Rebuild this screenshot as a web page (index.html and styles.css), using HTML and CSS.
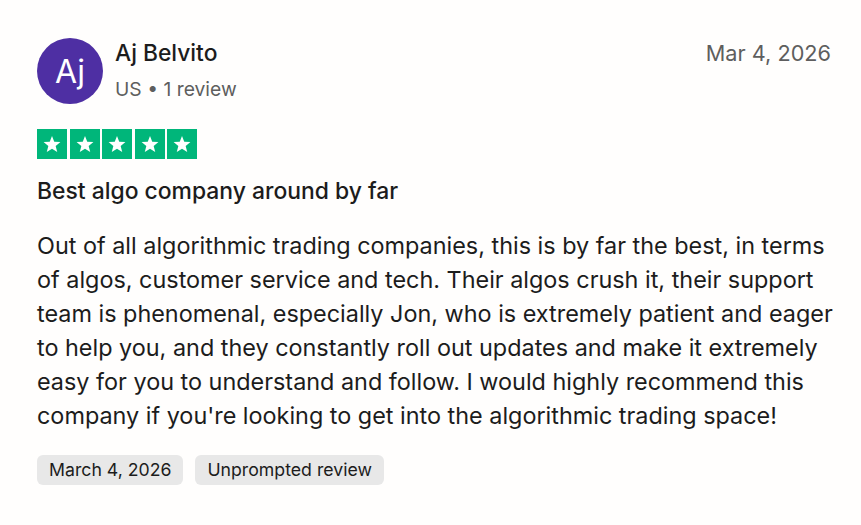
FILE: index.html
```html
<!DOCTYPE html>
<html lang="en">
<head>
<meta charset="utf-8">
<link rel="stylesheet" href="styles.css">
</head>
<body>
<article class="review">
  <header class="head">
    <div class="consumer">
      <div class="avatar">Aj</div>
      <div class="who">
        <div class="name">Aj Belvito</div>
        <div class="meta">US <span class="dot">•</span> 1 review</div>
      </div>
    </div>
    <time class="date">Mar 4, 2026</time>
  </header>
  <div class="stars">
    <span class="star"><svg viewBox="0 0 24 24"><path d="M12 3.2l2.47 6.3 6.73.38-5.2 4.28 1.7 6.54L12 17.05 6.3 20.7l1.7-6.54-5.2-4.28 6.730-.38z"/></svg></span>
    <span class="star"><svg viewBox="0 0 24 24"><path d="M12 3.2l2.47 6.3 6.73.38-5.2 4.28 1.7 6.54L12 17.05 6.3 20.7l1.7-6.54-5.2-4.28 6.73-.38z"/></svg></span>
    <span class="star"><svg viewBox="0 0 24 24"><path d="M12 3.2l2.47 6.3 6.73.38-5.2 4.28 1.7 6.54L12 17.05 6.3 20.7l1.7-6.54-5.2-4.28 6.73-.38z"/></svg></span>
    <span class="star"><svg viewBox="0 0 24 24"><path d="M12 3.2l2.47 6.3 6.73.38-5.2 4.28 1.7 6.54L12 17.05 6.3 20.7l1.7-6.54-5.2-4.28 6.73-.38z"/></svg></span>
    <span class="star"><svg viewBox="0 0 24 24"><path d="M12 3.2l2.47 6.3 6.73.38-5.2 4.28 1.7 6.54L12 17.05 6.3 20.7l1.7-6.54-5.2-4.28 6.73-.38z"/></svg></span>
  </div>
  <h2 class="title">Best algo company around by far</h2>
  <p class="text">Out of all algorithmic trading companies, this is by far the best, in terms<br>of algos, customer service and tech. Their algos crush it, their support<br>team is phenomenal, especially Jon, who is extremely patient and eager<br>to help you, and they constantly roll out updates and make it extremely<br>easy for you to understand and follow. I would highly recommend this<br>company if you're looking to get into the algorithmic trading space!</p>
  <div class="tags">
    <span class="tag">March 4, 2026</span>
    <span class="tag">Unprompted review</span>
  </div>
</article>
</body>
</html>
```
FILE: styles.css
```css
html, body {
  margin: 0;
  padding: 0;
  background: #fffefd;
}
body {
  font-family: Inter, "Noto Sans", sans-serif;
  color: #1c1c1c;
}
.review {
  width: 794px;
  padding: 38px 0 0 37px;
}
.head {
  display: flex;
  justify-content: space-between;
  align-items: flex-start;
}
.consumer {
  display: flex;
  gap: 12px;
  align-items: flex-start;
}
.avatar {
  width: 66px;
  height: 66px;
  border-radius: 50%;
  background: #4e2fa3;
  color: #fff;
  display: flex;
  align-items: center;
  justify-content: center;
  font-size: 32px;
  font-weight: 400;
}
.who {
  padding-top: 1px;
}
.name {
  font-size: 22.8px;
  font-weight: 500;
  line-height: 28px;
}
.meta {
  margin-top: 10px;
  font-size: 19.3px;
  line-height: 24px;
  color: #5e5e5e;
}
.date {
  padding-top: 2px;
  font-size: 21.7px;
  line-height: 26px;
  color: #5e5e5e;
}
.stars {
  display: flex;
  gap: 2.5px;
  margin-top: 25px;
}
.star {
  width: 30px;
  height: 30px;
  background: #00b67a;
  display: flex;
  align-items: center;
  justify-content: center;
}
.star svg {
  width: 22px;
  height: 22px;
  fill: #fff;
}
.title {
  margin: 18px 0 0;
  font-size: 22.9px;
  font-weight: 500;
  line-height: 28px;
}
.text {
  margin: 24px 0 0;
  font-size: 23.4px;
  line-height: 34px;
  white-space: nowrap;
}
.tags {
  display: flex;
  gap: 12px;
  margin-top: 22px;
}
.tag {
  background: #e8e8e8;
  border-radius: 6px;
  font-size: 17.7px;
  line-height: 30px;
  padding: 0 12px;
}
```
